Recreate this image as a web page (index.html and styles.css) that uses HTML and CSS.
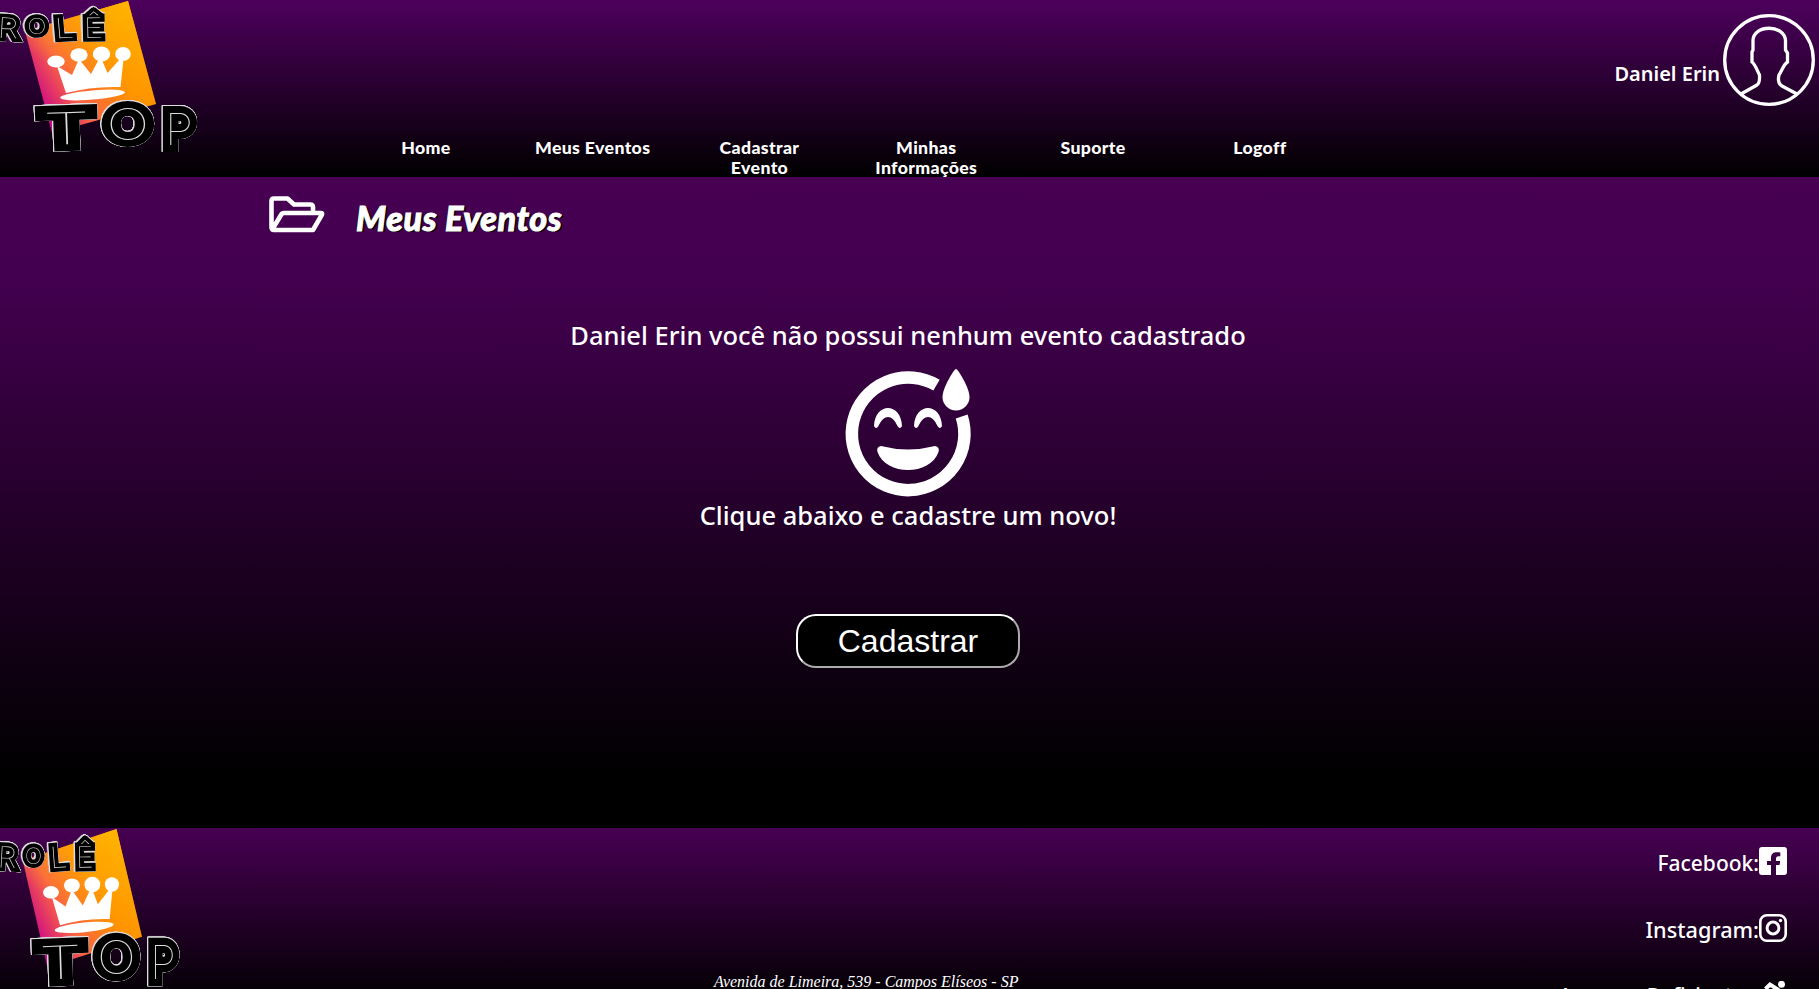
FILE: index.html
```html
<!DOCTYPE html>
<html lang="pt-BR">
<head>
<meta charset="utf-8">
<title>Rolê Top - Meus Eventos</title>
<link rel="stylesheet" href="styles.css">
</head>
<body>
<svg class="defs" width="0" height="0" aria-hidden="true">
  <defs>
    <linearGradient id="sun" gradientUnits="userSpaceOnUse" x1="40" y1="112" x2="120" y2="66">
      <stop offset="0" stop-color="#c8008f"/>
      <stop offset=".45" stop-color="#fb6542"/>
      <stop offset=".95" stop-color="#ff8c00"/>
    </linearGradient>
    <linearGradient id="glow" gradientUnits="userSpaceOnUse" x1="90" y1="90" x2="140" y2="10">
      <stop offset="0" stop-color="#ffb400" stop-opacity="0"/>
      <stop offset="1" stop-color="#ffb400"/>
    </linearGradient>
  </defs>
  <symbol id="logo" viewBox="0 0 200 152" preserveAspectRatio="none">
    <path d="M128 1L156 104 52 133 25 31z" fill="url(#sun)"/>
    <path d="M128 1L156 104 52 133 25 31z" fill="url(#glow)"/>
    <g fill="#fff">
      <ellipse cx="56" cy="61.500" rx="8.700" ry="6"/>
      <ellipse cx="79" cy="55" rx="8.700" ry="6.800"/>
      <ellipse cx="101.500" cy="54" rx="8.700" ry="7.500"/>
      <ellipse cx="123" cy="54" rx="7.800" ry="7"/>
      <path d="M57 66L72 75 79 59 91 74 98.500 60H102L107.500 73 120 59H123.500L120.500 87Q92 86 66 93z"/>
      <ellipse cx="92.500" cy="95" rx="32.500" ry="4.600" transform="rotate(-5 92.500 95)"/>
    </g>
    <g class="logo-type logo-role" transform="scale(1.2 1)">
      <text y="37.500" x="-2.500" rotate="3">R<tspan class="small-o" x="22.700" y="34.300" rotate="0">O</tspan><tspan x="46.500" y="38.500" rotate="-4">L</tspan><tspan x="69.700" y="38" rotate="-1">Ê</tspan></text>
    </g>
    <g class="logo-type logo-top">
      <text transform="translate(43.500 145) rotate(-2) scale(1.75 1)">T</text>
      <text transform="translate(106.500 139.500) scale(1.3 1)">O</text>
      <text transform="translate(165 144.500) scale(1.05 1)">P</text>
    </g>
  </symbol>
</svg>

<header class="header">
  <svg class="logo"><use href="#logo"/></svg>
  <nav class="nav">
    <a>Home</a><a>Meus Eventos</a><a>Cadastrar Evento</a><a>Minhas Informações</a><a>Suporte</a><a>Logoff</a>
  </nav>
  <div class="user">
    <span class="user-name">Daniel Erin</span>
    <svg class="avatar" viewBox="0 0 92 94" fill="none" stroke="#fff" stroke-width="3.300">
      <circle cx="46" cy="47" r="44.300"/>
      <path d="M18 81L34 72Q37 70 36.500 62C34 57 32 51 29 49V39L30 37V28C30 11 62 11 62.500 28V37L64.500 40V49C61 51 59 57 56 62Q54 70 59 73L74 81"/>
    </svg>
  </div>
</header>

<main class="main">
  <div class="title-row">
    <svg class="folder" viewBox="0 0 56 37" fill="none" stroke="#fff" stroke-width="4.600" stroke-linejoin="round">
      <path d="M44 16V11Q44 8.500 41 8.500H25L18.500 2.500H5Q2.500 2.500 2.500 5V31Q2.500 34 5 34H44L53 18.500Q53.500 17 52 17H15Q13 17 12 19L3.500 33"/>
    </svg>
    <h1 class="title">Meus Eventos</h1>
  </div>
  <section class="empty">
    <p class="empty-top">Daniel Erin você não possui nenhum evento cadastrado</p>
    <svg class="emoji" viewBox="0 0 126 128">
      <path d="M91.500 16.200A56.300 56.300 0 1 0 116.700 47.500" fill="none" stroke="#fff" stroke-width="12.500"/>
      <g fill="#fff">
        <path d="M111 0C113 0 124.500 19 124.500 28A13.500 13.500 0 0 1 97.500 28C97.500 19 109 0 111 0z"/>
        <path d="M29 57C30 33 56 33 57 57Q55 61 52.500 57C47 45 39 45 33.500 57Q31 61 29 57zM69 57C70 33 96 33 97 57Q95 61 92.500 57C87 45 79 45 73.500 57Q71 61 69 57zM36 77Q63 84 90 77Q95 78 93.500 83C85 107 41 107 32.500 83Q31 78 36 77z"/>
      </g>
    </svg>
    <p class="empty-bottom">Clique abaixo e cadastre um novo!</p>
    <button class="button">Cadastrar</button>
  </section>
</main>

<footer class="footer">
  <svg class="logo logo-small"><use href="#logo"/></svg>
  <address class="address">Avenida de Limeira, 539 - Campos Elíseos - SP</address>
  <ul class="links">
    <li><span class="fb">Facebook:</span>
      <svg viewBox="0 0 28 28"><path fill="#fff" fill-rule="evenodd" d="M3 0H25Q28 0 28 3V25Q28 28 25 28H17V18H20.500L21.200 14H17V11.500Q17 9.300 19.500 9.300H21.300V5.500C15 4.300 12 6 12 11V14H8V18H12V28H3Q0 28 0 25V3Q0 0 3 0z"/></svg></li>
    <li><span class="ig">Instagram:</span>
      <svg viewBox="0 0 28 28" fill="none" stroke="#fff" stroke-width="2.600"><rect x="1.300" y="1.300" width="25.400" height="25.400" rx="6.500"/><circle cx="14" cy="14" r="5.900" stroke-width="3"/><circle cx="21.500" cy="6.500" r="1.700" fill="#fff" stroke="none"/></svg></li>
    <li><span class="ac">Acesso a Deficientes:</span>
      <svg viewBox="0 0 28 28" fill="none" stroke="#fff" stroke-width="4"><circle cx="22.500" cy="3.300" r="3.500" fill="#fff" stroke="none"/><path d="M6.500 8L11 3.500 18 8 13 14H20L19 21"/><path d="M9 14A6.500 6.500 0 1 0 17 22"/></svg></li>
  </ul>
</footer>
</body>
</html>
```
FILE: styles.css
```css
* { box-sizing: border-box; }
html, body { height: 989px; overflow: hidden; }
body { margin: 0; background: #000; color: #fff; font-family: "Noto Sans", sans-serif; }
.defs { position: absolute; }

.header {
  display: grid;
  grid-template-columns: 342px 1001px 1fr;
  height: 177px;
  background: linear-gradient(#4d005c, #000);
}
.logo { display: block; width: 200px; height: 152px; }
.logo-small { width: 182px; height: 159px; }
.logo-type {
  font-family: Inter, sans-serif;
  font-weight: 100;
  fill: #ddd;
  stroke: #000;
  stroke-linejoin: miter;
  stroke-miterlimit: 2;
  paint-order: stroke;
  filter: drop-shadow(.8px 0 0 #ddd) drop-shadow(-.8px 0 0 #ddd) drop-shadow(0 .8px 0 #ddd) drop-shadow(0 -.8px 0 #ddd);
}
.logo-role { font-size: 28px; stroke-width: 7.5px; }
.small-o { font-size: 21.500px; }
.logo-top { font-size: 44px; stroke-width: 14px; }

.nav { display: flex; padding-top: 138px; }
.nav a {
  width: 166.800px;
  padding: 0 24px 0 25px;
  text-align: center;
  letter-spacing: .35px;
  font: 900 17.700px/20px Lato, sans-serif;
}
.user { display: flex; justify-content: flex-end; padding: 13px 4px 0 0; }
.user-name { margin: 45px 3px 0 0; font-size: 20px; line-height: 32px; font-weight: 600; }
.avatar { width: 92px; height: 94px; }

.main { height: 651px; background: linear-gradient(#470052, #440050 15%, #000 92%); }
.title-row { display: flex; height: 80px; padding: 19px 0 0 269px; }
.folder { width: 56px; height: 37px; }
.title {
  margin: 2px 0 0 31px;
  font: italic 900 34px/40px Lato, sans-serif;
  letter-spacing: .6px;
  -webkit-text-stroke: 1px #fff;
  text-shadow: 1px 1px 0 #000, -1px 0 0 #000, 2px 1px 1px #000;
}
.empty { display: flex; flex-direction: column; align-items: center; padding-right: 3px; }
.empty p { margin: 0; font-size: 25.500px; line-height: 40px; font-weight: 500; white-space: nowrap; }
.empty .empty-top { margin-top: 58px; }
.emoji { width: 126px; height: 128px; margin-top: 14px; overflow: visible; }
.empty .empty-bottom { margin-top: -2px; }
.button {
  width: 224px;
  height: 54px;
  margin-top: 79px;
  padding: 0;
  border: 2px outset #fff;
  border-radius: 20px;
  background: #000;
  color: #fff;
  font: 32px "Liberation Sans", sans-serif;
}

.footer {
  display: grid;
  grid-template-columns: 714px 1fr 420px;
  height: 161px;
  overflow: hidden;
  background: linear-gradient(#470052, #000 177px);
}
.address { padding-top: 145px; font: italic 16px/18px "Liberation Serif", serif; }
.links { margin: 0; padding: 19px 32px 0 0; list-style: none; }
.links li { display: flex; justify-content: flex-end; height: 67px; }
.links svg { width: 28px; height: 28px; }
.links span { margin-top: 1px; font-size: 21px; line-height: 30px; font-weight: 500; }
.links .ig { font-size: 21.700px; }
.links .ac { margin-top: -1px; font-size: 20px; }
```
